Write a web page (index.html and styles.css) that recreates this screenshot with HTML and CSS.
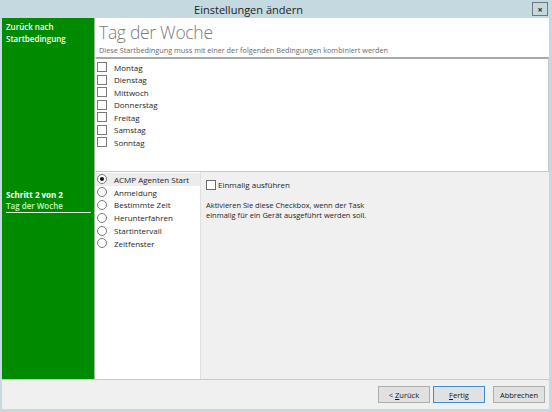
FILE: index.html
```html
<!DOCTYPE html>
<html>
<head>
<meta charset="utf-8">
<link rel="stylesheet" href="styles.css">
</head>
<body>
<div class="window">
  <div class="titlebar">
    <span class="title">Einstellungen ändern</span>
    <span class="close">×</span>
  </div>
  <div class="client">
    <div class="main">
      <div class="sidebar">
        <div class="back">Zurück nach<br>Startbedingung</div>
        <div class="step">
          <div class="step-num">Schritt 2 von 2</div>
          <div class="step-name">Tag der Woche</div>
        </div>
      </div>
      <div class="content">
        <div class="header">
          <div class="h1">Tag der Woche</div>
          <div class="sub">Diese Startbedingung muss mit einer der folgenden Bedingungen kombiniert werden</div>
        </div>
        <div class="daylist">
          <div class="day"><span class="cb"></span>Montag</div>
          <div class="day"><span class="cb"></span>Dienstag</div>
          <div class="day"><span class="cb"></span>Mittwoch</div>
          <div class="day"><span class="cb"></span>Donnerstag</div>
          <div class="day"><span class="cb"></span>Freitag</div>
          <div class="day"><span class="cb"></span>Samstag</div>
          <div class="day"><span class="cb"></span>Sonntag</div>
        </div>
        <div class="lower">
          <div class="radios">
            <div class="radio sel"><span class="rb on"></span>ACMP Agenten Start</div>
            <div class="radio"><span class="rb"></span>Anmeldung</div>
            <div class="radio"><span class="rb"></span>Bestimmte Zeit</div>
            <div class="radio"><span class="rb"></span>Herunterfahren</div>
            <div class="radio"><span class="rb"></span>Startintervall</div>
            <div class="radio"><span class="rb"></span>Zeitfenster</div>
          </div>
          <div class="panel">
            <div class="once"><span class="cb2"></span>Einmalig ausführen</div>
            <div class="desc">Aktivieren Sie diese Checkbox, wenn der Task<br>einmalig für ein Gerät ausgeführt werden soll.</div>
          </div>
        </div>
      </div>
    </div>
    <div class="footer">
      <button class="btn"><span>&lt; <u>Z</u>urück</span></button>
      <button class="btn def"><span><u>F</u>ertig</span></button>
      <button class="btn cancel"><span>Abbrechen</span></button>
    </div>
  </div>
</div>
</body>
</html>
```
FILE: styles.css
```css
* { box-sizing: border-box; }
html, body { margin: 0; padding: 0; }
body { width: 552px; height: 412px; overflow: hidden; font-family: "Open Sans", "Noto Sans", sans-serif; font-size: 8px; color: #1e1e1e; }
.window { width: 552px; height: 412px; background: #c5d9e1; display: flex; flex-direction: column; padding: 0 3px 3px 2px; }
.titlebar { height: 18px; display: flex; align-items: center; position: relative; flex: none; }
.title { flex: 1; text-align: center; font-size: 11px; color: #222; padding-right: 54px; padding-top: 1px; }
.close { position: absolute; right: 1px; top: 2px; width: 16px; height: 14px; border: 1px solid #6a7a80; font-size: 9px; font-weight: bold; display: flex; align-items: center; justify-content: center; line-height: 1; color: #222; }
.client { flex: 1; display: flex; flex-direction: column; background: #f0f0f0; }
.main { flex: 1; display: flex; border-bottom: 1px solid #c8c8c8; }
.sidebar { width: 92px; background: #008a00; color: #fff; display: flex; flex-direction: column; padding: 3px 3px 0 4px; flex: none; }
.back { font-weight: 600; font-size: 8px; line-height: 12px; }
.step { margin-top: 144px; border-bottom: 1px solid #d8efd8; padding-bottom: 1px; }
.step-num { font-weight: 700; font-size: 8px; line-height: 11px; }
.step-name { color: #c8f5c8; font-size: 8px; line-height: 11px; font-weight: 600; }
.content { flex: 1; display: flex; flex-direction: column; border-left: 1px solid #9bbf9b; }
.header { background: #fff; height: 39px; padding: 1px 0 0 4px; }
.h1 { font-size: 17.5px; font-weight: 300; color: #7a7a7a; line-height: 26px; letter-spacing: -0.3px; }
.sub { color: #6a6a6a; font-size: 7.3px; line-height: 10px; }
.daylist { background: #fff; height: 115px; border-style: solid; border-width: 2px 1px 1px 1px; border-color: #a8a8a8 #c8c8c8 #c8c8c8 #fff; padding-top: 2px; padding-left: 1px; }
.day { height: 12.5px; display: flex; align-items: center; font-size: 8px; }
.cb { width: 10px; height: 10px; border: 1px solid #7a7a7a; margin-right: 7px; background: #fff; }
.lower { flex: 1; display: flex; }
.radios { width: 106px; background: #fff; padding-top: 1px; border-right: 1px solid #e0e0e0; }
.radio { height: 12.8px; display: flex; align-items: center; padding-left: 2px; font-size: 8px; }
.radio.sel { background: #ececec; }
.rb { width: 10px; height: 10px; border: 1px solid #7a7a7a; border-radius: 50%; margin-right: 7px; background: #fff; position: relative; }
.rb.on::after { content: ""; position: absolute; left: 2px; top: 2px; width: 4px; height: 4px; border-radius: 50%; background: #111; }
.panel { flex: 1; padding: 7px 0 0 5px; }
.once { display: flex; align-items: center; font-size: 8px; }
.cb2 { width: 10px; height: 10px; border: 1px solid #6a6a6a; margin-right: 2px; background: #fff; }
.desc { margin-top: 10px; font-size: 7.5px; line-height: 10px; }
.footer { height: 29px; flex: none; display: flex; align-items: center; justify-content: flex-end; padding-right: 4px; gap: 3px; }
.btn { width: 52px; height: 17px; border: 1px solid #adadad; background: #e1e1e1; font-family: inherit; font-size: 7.5px; color: #111; padding: 0; display: flex; align-items: center; justify-content: center; }
.btn.def { border-color: #3c8fd6; }
.btn.cancel { margin-left: 5px; }
```
